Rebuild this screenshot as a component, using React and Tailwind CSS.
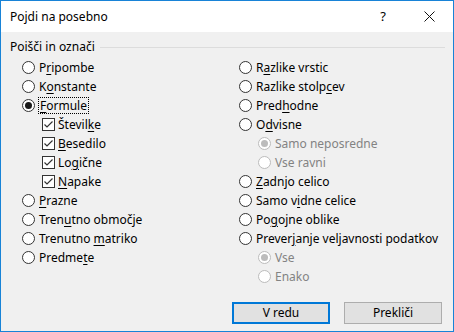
import React from "react";

const F = { fontFamily: '"Noto Sans", "Segoe UI", sans-serif' };

function Radio({ checked, disabled }) {
  return (
    <span
      className={`w-[13px] h-[13px] rounded-full border flex items-center justify-center shrink-0 bg-white ${
        disabled ? "border-[#bcbcbc]" : "border-[#333333]"
      }`}
    >
      {checked && (
        <span
          className={`w-[7px] h-[7px] rounded-full ${
            disabled ? "bg-[#bcbcbc]" : "bg-[#1a1a1a]"
          }`}
        />
      )}
    </span>
  );
}

function Check() {
  return (
    <span className="w-[13px] h-[13px] border border-[#333333] bg-white flex items-center justify-center shrink-0">
      <svg width="11" height="11" viewBox="0 0 11 11">
        <polyline points="1.5,5.5 4,8 9.5,2.5" fill="none" stroke="#333333" strokeWidth="1.2" />
      </svg>
    </span>
  );
}

function Label({ parts, disabled, focus }) {
  const [a, k, b] = parts;
  return (
    <span
      className={`text-[12px] leading-[15px] whitespace-nowrap ${
        disabled ? "text-[#838383]" : "text-black"
      } ${focus ? "outline outline-1 outline-dotted outline-black outline-offset-0 px-[1px]" : ""}`}
    >
      {a}
      {k && <span className="underline underline-offset-[2px]">{k}</span>}
      {b}
    </span>
  );
}

function RadioRow({ parts, checked, disabled, focus, indent }) {
  return (
    <div className={`h-[19px] flex items-center gap-[4px] ${indent ? "pl-[19px]" : ""}`}>
      <Radio checked={checked} disabled={disabled} />
      <Label parts={parts} disabled={disabled} focus={focus} />
    </div>
  );
}

function CheckRow({ parts }) {
  return (
    <div className="h-[19px] flex items-center gap-[3px] pl-[20px]">
      <Check />
      <Label parts={parts} />
    </div>
  );
}

export default function App() {
  return (
    <div
      style={F}
      className="w-[454px] h-[332px] border border-[#1883d7] bg-[#f0f0f0] flex flex-col overflow-hidden"
    >
      <div className="h-[31px] bg-white flex items-center pl-[9px] pr-[18px] shrink-0">
        <span className="text-[12px] text-black flex-1">Pojdi na posebno</span>
        <span className="text-[13px] text-black mr-[38px]">?</span>
        <svg width="11" height="11" viewBox="0 0 11 11">
          <path d="M0.5 0.5 L10.5 10.5 M10.5 0.5 L0.5 10.5" stroke="#111" strokeWidth="1" />
        </svg>
      </div>

      <div className="flex items-center pl-[9px] pr-[8px] h-[15px] mt-[7px]">
        <span className="text-[12px] text-black whitespace-nowrap">Poišči in označi</span>
        <span className="flex-1 h-px bg-[#dcdcdc] ml-[5px] mt-[2px]" />
      </div>

      <div className="flex pl-[21px] mt-[4px]">
        <div className="w-[217px] flex flex-col">
          <RadioRow parts={["P", "r", "ipombe"]} />
          <RadioRow parts={["K", "o", "nstante"]} />
          <RadioRow parts={["", "F", "ormule"]} checked focus />
          <CheckRow parts={["Števil", "k", "e"]} />
          <CheckRow parts={["", "B", "esedilo"]} />
          <CheckRow parts={["Lo", "g", "ične"]} />
          <CheckRow parts={["", "N", "apake"]} />
          <RadioRow parts={["", "P", "razne"]} />
          <RadioRow parts={["Tren", "u", "tno območje"]} />
          <RadioRow parts={["Trenutno ", "m", "atriko"]} />
          <RadioRow parts={["Predme", "t", "e"]} />
        </div>
        <div className="flex flex-col">
          <RadioRow parts={["R", "a", "zlike vrstic"]} />
          <RadioRow parts={["Razlike stolp", "c", "ev"]} />
          <RadioRow parts={["Pred", "h", "odne"]} />
          <RadioRow parts={["O", "d", "visne"]} />
          <RadioRow parts={["Samo neposredne"]} indent disabled checked />
          <RadioRow parts={["Vse ravni"]} indent disabled />
          <RadioRow parts={["", "Z", "adnjo celico"]} />
          <RadioRow parts={["Samo v", "i", "dne celice"]} />
          <RadioRow parts={["Po", "g", "ojne oblike"]} />
          <RadioRow parts={["Prever", "j", "anje veljavnosti podatkov"]} />
          <RadioRow parts={["Vse"]} indent disabled checked />
          <RadioRow parts={["Enako"]} indent disabled />
        </div>
      </div>

      <div className="flex justify-end gap-[14px] pr-[11px] mt-[16px]">
        <button className="w-[98px] h-[22px] border-2 border-[#0078d7] bg-[#e1e1e1] text-[12px] text-black flex items-center justify-center">
          V redu
        </button>
        <button className="w-[98px] h-[22px] border border-[#adadad] bg-[#e1e1e1] text-[12px] text-black flex items-center justify-center">
          Prekliči
        </button>
      </div>
    </div>
  );
}
